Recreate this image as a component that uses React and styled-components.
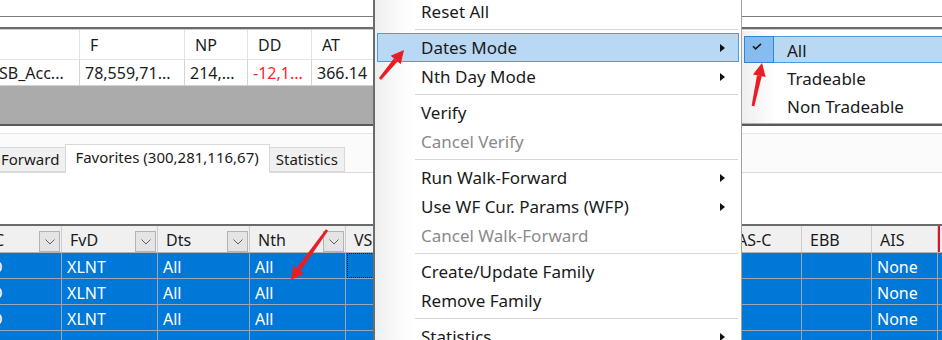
import React from 'react';
import styled, { createGlobalStyle } from 'styled-components';

const GlobalStyle = createGlobalStyle`
  html, body { margin: 0; padding: 0; background: #fff; }
  #root { width: 942px; height: 340px; }
`;

const FONT = `"Noto Sans", "DejaVu Sans", sans-serif`;

const resultCols = [
  { key: 'name', w: 86, title: '', value: 'SB_Acc...' },
  { key: 'f', w: 105, title: 'F', value: '78,559,71...' },
  { key: 'np', w: 63, title: 'NP', value: '214,...' },
  { key: 'dd', w: 64, title: 'DD', value: '-12,1...', neg: true },
  { key: 'at', w: 70, title: 'AT', value: '366.14' },
  { key: 'rest', w: 700, title: '', value: '' },
];

const gridCols = [
  { key: 'c', w: 76, title: 'C', filter: true, value: 'D' },
  { key: 'fvd', w: 96, title: 'FvD', filter: true, value: 'XLNT' },
  { key: 'dts', w: 92, title: 'Dts', filter: true, value: 'All' },
  { key: 'nth', w: 96, title: 'Nth', filter: true, value: 'All' },
  { key: 'vs', w: 74, title: 'VS', value: '', focus: true },
  { key: 'hidden', w: 309, title: '', value: '' },
  { key: 'asc', w: 73, title: 'AS-C', value: '' },
  { key: 'ebb', w: 70, title: 'EBB', value: '' },
  { key: 'ais', w: 66, title: 'AIS', value: 'None' },
  { key: 'next', w: 80, title: '', value: '', marked: true },
];

// the fourth row is only a sliver at the bottom edge, its text lies below the window
const gridRows = [true, true, true, false];

const menuItems = [
  { label: 'Reset All' },
  { sep: true },
  { label: 'Dates Mode', sub: true, hot: true },
  { label: 'Nth Day Mode', sub: true },
  { sep: true },
  { label: 'Verify' },
  { label: 'Cancel Verify', disabled: true },
  { sep: true },
  { label: 'Run Walk-Forward', sub: true },
  { label: 'Use WF Cur. Params (WFP)', sub: true },
  { label: 'Cancel Walk-Forward', disabled: true },
  { sep: true },
  { label: 'Create/Update Family' },
  { label: 'Remove Family' },
  { sep: true },
  { label: 'Statistics', sub: true },
];

const subItems = [
  { label: 'All', checked: true, hot: true },
  { label: 'Tradeable' },
  { label: 'Non Tradeable' },
];

const arrows = [
  { x1: 380, y1: 79, x2: 404, y2: 50 },
  { x1: 753, y1: 106, x2: 762, y2: 63 },
  { x1: 327, y1: 230, x2: 291, y2: 280 },
];

const RedArrow = ({ x1, y1, x2, y2 }) => {
  const dx = x2 - x1;
  const dy = y2 - y1;
  const len = Math.hypot(dx, dy);
  const ux = dx / len;
  const uy = dy / len;
  const headLen = 13;
  const headW = 6.5;
  const bx = x2 - ux * headLen;
  const by = y2 - uy * headLen;
  const tailW = 1.4;
  const neckW = 2.4;
  const shaft = [
    [x1 - uy * tailW, y1 + ux * tailW],
    [bx - uy * neckW, by + ux * neckW],
    [bx + uy * neckW, by - ux * neckW],
    [x1 + uy * tailW, y1 - ux * tailW],
  ];
  const head = [
    [x2, y2],
    [bx - uy * headW, by + ux * headW],
    [bx + uy * headW, by - ux * headW],
  ];
  const pts = (list) => list.map((p) => p.join(',')).join(' ');
  return (
    <g fill="#ec1c24">
      <polygon points={pts(shaft)} />
      <polygon points={pts(head)} />
    </g>
  );
};

const App = () => {
  return (
    <>
      <GlobalStyle />
      <Screen>
        <TopPanel />
        <Splitter />

        <Results>
          <ResultsHead>
            {resultCols.map((c) => (
              <HeadCell key={c.key} $w={c.w}>
                {c.title}
              </HeadCell>
            ))}
          </ResultsHead>
          <ResultsRow>
            {resultCols.map((c) => (
              <ValueCell key={c.key} $w={c.w} $neg={c.neg}>
                {c.value}
              </ValueCell>
            ))}
          </ResultsRow>
        </Results>

        <EmptyArea />

        <TabsPanel>
          <TabStrip>
            <Tab>Forward</Tab>
            <Tab $active>Favorites (300,281,116,67)</Tab>
            <Tab>Statistics</Tab>
          </TabStrip>
          <TabBody />
        </TabsPanel>

        <Grid>
          <GridHead>
            {gridCols.map((c) => (
              <GridHeadCell key={c.key} $w={c.w} $marked={c.marked}>
                <span>{c.title}</span>
                {c.filter && (
                  <FilterButton>
                    <svg width="10" height="6" viewBox="0 0 10 6">
                      <polyline points="0.5,0.5 5,5 9.5,0.5" fill="none" stroke="#5f5f5f" strokeWidth="1" />
                    </svg>
                  </FilterButton>
                )}
              </GridHeadCell>
            ))}
          </GridHead>
          {gridRows.map((filled, r) => (
            <GridRow key={r}>
              {gridCols.map((c) => (
                <GridCell key={c.key} $w={c.w}>
                  {r === 0 && c.focus && <FocusRect />}
                  {filled ? c.value : ''}
                </GridCell>
              ))}
            </GridRow>
          ))}
        </Grid>

        <ContextMenu>
          {menuItems.map((item, i) =>
            item.sep ? (
              <Separator key={i}>
                <span />
              </Separator>
            ) : (
              <MenuItem key={i} $hot={item.hot} $disabled={item.disabled}>
                {item.label}
                {item.sub && <SubArrow />}
              </MenuItem>
            )
          )}
        </ContextMenu>

        <SubMenu>
          {subItems.map((item) => (
            <SubItem key={item.label} $hot={item.hot}>
              <CheckSlot $checked={item.checked}>
                {item.checked && (
                  <svg width="10" height="7" viewBox="0 0 10 7">
                    <polyline points="1,3.2 3.6,5.8 9,0.8" fill="none" stroke="#1a1a1a" strokeWidth="1.6" />
                  </svg>
                )}
              </CheckSlot>
              <SubLabel>{item.label}</SubLabel>
            </SubItem>
          ))}
        </SubMenu>

        <Annotations width="942" height="340" viewBox="0 0 942 340">
          {arrows.map((a, i) => (
            <RedArrow key={i} {...a} />
          ))}
        </Annotations>
      </Screen>
    </>
  );
};

export default App;

const Screen = styled.div`
  position: relative;
  width: 942px;
  height: 340px;
  overflow: hidden;
  background: #fff;
  display: flex;
  flex-direction: column;
  font-family: ${FONT};
  color: #1b1b1b;
`;

const TopPanel = styled.div`
  flex: none;
  height: 16px;
  border-bottom: 1px solid #7c7c7c;
`;

const Splitter = styled.div`
  flex: none;
  margin-top: 10px;
  height: 0;
  border-top: 2px solid #6c6c6c;
  border-bottom: 1px solid #c9c9c9;
`;

const Results = styled.div`
  flex: none;
  margin-left: -6px;
  font-size: 16px;
`;

const ResultsHead = styled.div`
  display: flex;
  height: 29px;
  border-bottom: 1px solid #e4e4e4;
  background: #fff;
`;

const ResultsRow = styled.div`
  display: flex;
  height: 25px;
  border-bottom: 1px solid #d2d2d2;
  background: #fff;
`;

const HeadCell = styled.div`
  flex: none;
  width: ${(p) => p.$w}px;
  box-sizing: border-box;
  display: flex;
  align-items: center;
  padding-left: 10px;
  border-right: 1px solid #e2e2e2;
  white-space: nowrap;
`;

const ValueCell = styled(HeadCell)`
  padding-left: 5px;
  padding-top: 1px;
  border-right-color: #d4d4d4;
  color: ${(p) => (p.$neg ? '#ff2424' : '#1b1b1b')};
`;

const EmptyArea = styled.div`
  flex: none;
  height: 38px;
  background: #ababab;
`;

const TabsPanel = styled.div`
  flex: none;
  border-top: 2px solid #5a5a5a;
  padding-top: 7px;
  background: #fff;
`;

const TabStrip = styled.div`
  display: flex;
  align-items: flex-end;
  height: 38px;
  margin-left: -6px;
  border-top: 1px solid #e6e6e6;
  border-bottom: 1px solid #d9d9d9;
  background: #fbfbfb;
  font-size: 15px;
`;

const Tab = styled.div`
  position: relative;
  box-sizing: border-box;
  height: ${(p) => (p.$active ? 29 : 25)}px;
  margin: ${(p) => (p.$active ? '0 -1px -1px -1px' : '0')};
  padding: ${(p) => (p.$active ? '0 10px 4px 9px' : '0 6px 1px 6px')};
  display: flex;
  align-items: center;
  border: 1px solid #d9d9d9;
  border-bottom: ${(p) => (p.$active ? 'none' : '1px solid #d9d9d9')};
  background: ${(p) => (p.$active ? '#fff' : '#f0f0f0')};
  z-index: ${(p) => (p.$active ? 1 : 0)};
  white-space: nowrap;
`;

const TabBody = styled.div`
  height: 51px;
  background: #fff;
`;

const Grid = styled.div`
  flex: none;
  border-top: 2px solid #6a6a6a;
  margin-left: -14px;
  font-size: 16px;
`;

const GridHead = styled.div`
  display: flex;
  height: 26px;
  border-bottom: 1px solid #b2b2b2;
  background: #f0f0f0;
`;

const GridHeadCell = styled.div`
  flex: none;
  width: ${(p) => p.$w}px;
  box-sizing: border-box;
  display: flex;
  align-items: center;
  padding: 2px 0 0 8px;
  border-right: 1px solid #cdcdcd;
  border-left: ${(p) => (p.$marked ? '2px solid #e81123' : 'none')};
  white-space: nowrap;
  overflow: hidden;
`;

const FilterButton = styled.div`
  margin-left: auto;
  margin-right: 1px;
  align-self: flex-end;
  width: 21px;
  height: 21px;
  box-sizing: border-box;
  display: flex;
  align-items: center;
  justify-content: center;
  border: 1px solid #b3b3b3;
  background: #e4e4e4;
`;

const GridRow = styled.div`
  display: flex;
  height: 25px;
  border-bottom: 1px solid #97a7b9;
  background: #0078d7;
  color: #fff;
`;

const GridCell = styled.div`
  position: relative;
  flex: none;
  width: ${(p) => p.$w}px;
  box-sizing: border-box;
  display: flex;
  align-items: center;
  padding: 3px 0 0 5px;
  border-right: 1px solid #97a7b9;
  white-space: nowrap;
`;

const FocusRect = styled.div`
  position: absolute;
  inset: 0 1px 0 1px;
  border: 1px dotted #2b1d05;
`;

const ContextMenu = styled.div`
  position: absolute;
  top: -3px;
  left: 373px;
  width: 369px;
  height: 360px;
  box-sizing: border-box;
  padding: 0 2px;
  border-left: 2px solid #6b6b6b;
  border-right: 1px solid #a3a3a3;
  background: linear-gradient(to right, #eeeeee 0, #f7f7f7 16px, #fdfdfd 30px, #fff 40px);
  font-size: 17px;
  z-index: 5;
`;

const MenuItem = styled.div`
  display: flex;
  align-items: center;
  height: 29px;
  box-sizing: border-box;
  padding: 0 13px 0 43px;
  border: 1px solid ${(p) => (p.$hot ? '#4d9be2' : 'transparent')};
  background: ${(p) => (p.$hot ? '#b9d8f3' : 'transparent')};
  color: ${(p) => (p.$disabled ? '#8a8a8a' : '#1a1a1a')};
  white-space: nowrap;
`;

const SubArrow = styled.span`
  margin-left: auto;
  width: 0;
  height: 0;
  border-left: 5px solid #111;
  border-top: 4px solid transparent;
  border-bottom: 4px solid transparent;
`;

const Separator = styled.div`
  display: flex;
  align-items: center;
  height: 7px;
  padding: 0 1px 0 38px;

  span {
    flex: 1;
    height: 1px;
    background: #d6d6d6;
  }
`;

const SubMenu = styled.div`
  position: absolute;
  top: 31px;
  left: 741px;
  width: 220px;
  height: 93px;
  box-sizing: border-box;
  padding: 4px 0 0 2px;
  border-left: 1px solid #a3a3a3;
  border-bottom: 1px solid #b0b0b0;
  background: linear-gradient(to right, #efefef 0, #f7f7f7 18px, #fdfdfd 30px, #fff 32px);
  font-size: 17px;
  z-index: 6;
`;

const SubItem = styled.div`
  display: flex;
  align-items: stretch;
  height: 27px;
  margin: 1px 0;
  box-sizing: border-box;
  border: 1px solid ${(p) => (p.$hot ? '#4d9be2' : 'transparent')};
  background: ${(p) => (p.$hot ? '#b9d8f3' : 'transparent')};
  color: #1a1a1a;
  white-space: nowrap;
`;

const CheckSlot = styled.div`
  flex: none;
  width: 30px;
  margin: -1px 0 -1px -1px;
  box-sizing: border-box;
  display: flex;
  align-items: center;
  justify-content: center;
  padding: 0 4px 7px 0;
  border: 1px solid ${(p) => (p.$checked ? '#2f84d8' : 'transparent')};
  background: ${(p) => (p.$checked ? '#87bdee' : 'transparent')};
`;

const SubLabel = styled.span`
  display: flex;
  align-items: center;
  padding: 1px 0 0 13px;
`;

const Annotations = styled.svg`
  position: absolute;
  top: 0;
  left: 0;
  pointer-events: none;
  z-index: 10;
`;
